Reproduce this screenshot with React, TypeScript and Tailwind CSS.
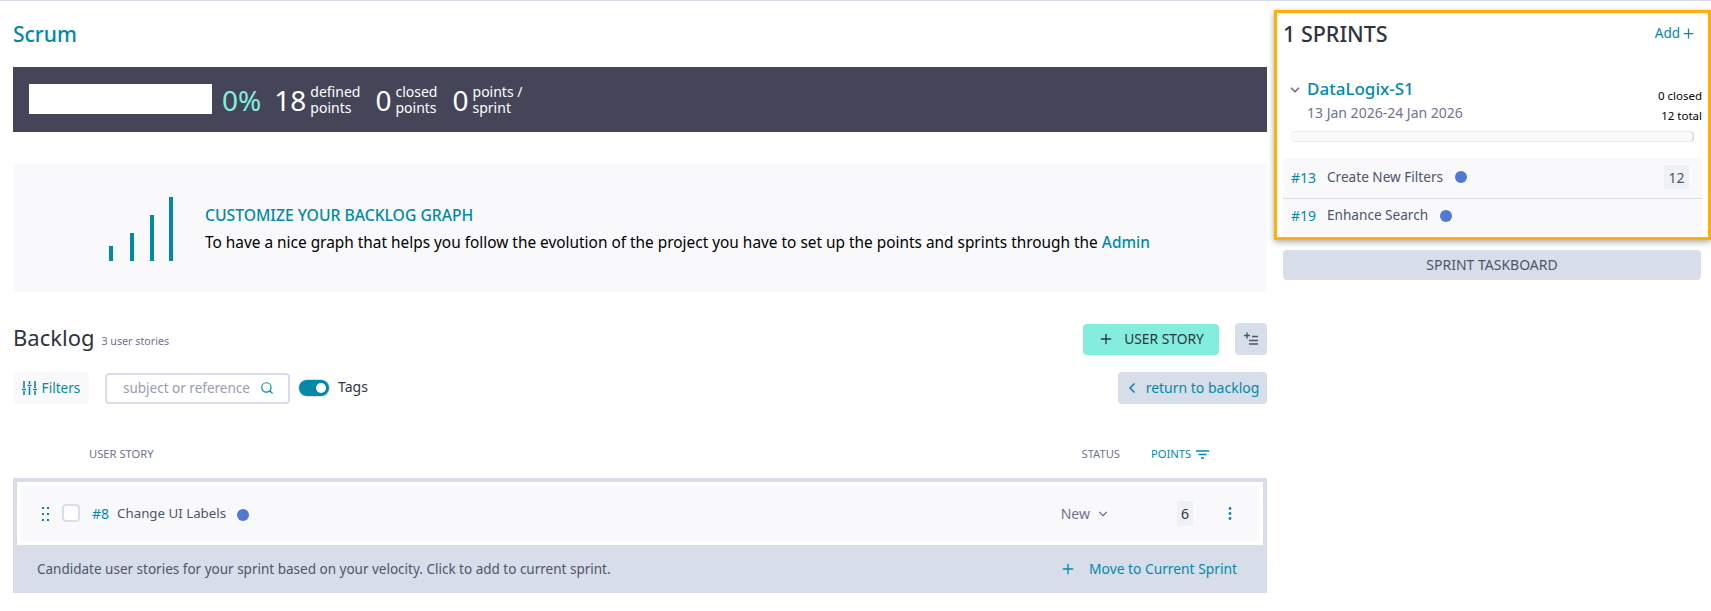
import { Search, Plus, ChevronDown, ChevronLeft } from 'lucide-react';

const font = 'font-["Noto_Sans",sans-serif]';

function Stat({ value, top, bottom }: { value: string; top: string; bottom: string }) {
  return (
    <div className="flex items-center gap-[4px] text-white">
      <span className="text-[28px] leading-none">{value}</span>
      <span className="text-[14px] leading-[16px]">
        {top}
        <br />
        {bottom}
      </span>
    </div>
  );
}

function SprintRow({ id, title, points, last }: { id: string; title: string; points?: string; last?: boolean }) {
  return (
    <div className={`flex items-center pl-2 pr-[13px] ${last ? 'h-[37px] pb-[4px]' : 'h-[41px] border-b border-[#d8dee9] pb-[2px]'}`}>
      <span className="w-[36px] text-[14px] text-[#008aa8]">{id}</span>
      <span className="text-[13.6px] text-[#4c566a]">{title}</span>
      <span className="ml-[12px] h-3 w-3 rounded-full bg-[#5178d3]" />
      {points && (
        <span className="ml-auto flex h-6 w-[25px] items-center justify-center bg-[#eff2f5] text-[14px] text-[#4c566a]">{points}</span>
      )}
    </div>
  );
}

export default function App() {
  return (
    <div className={`${font} h-[611px] w-[1711px] overflow-hidden border-t border-[#d8dee9] bg-white`}>
      <div className="flex">
        <main className="ml-[13px] w-[1254px]">
          <h1 className="mt-[21px] h-[45px] text-[21px] leading-[24px] font-medium text-[#008aa8]">Scrum</h1>

          <div className="flex h-[65px] items-center bg-[#444559] pl-4">
            <div className="-mt-[1px] h-[30px] w-[183px] bg-white" />
            <span className="ml-[10px] text-[28px] leading-none text-[#83eede]">0%</span>
            <div className="ml-[13px]"><Stat value="18" top="defined" bottom="points" /></div>
            <div className="ml-[15px]"><Stat value="0" top="closed" bottom="points" /></div>
            <div className="ml-[15px]"><Stat value="0" top="points /" bottom="sprint" /></div>
          </div>

          <div className="mt-8 flex h-[128px] items-center bg-[#f9f9fb] pl-[96px]">
            <svg width="74" height="64" viewBox="0 0 74 64" className="mt-[1px]">
              <rect x="0" y="49" width="4" height="15" fill="#008aa8" />
              <rect x="21" y="36" width="4" height="28" fill="#008aa8" />
              <rect x="41" y="18" width="4" height="46" fill="#008aa8" />
              <rect x="60" y="0" width="4" height="64" fill="#008aa8" />
            </svg>
            <div className="ml-[22px] mt-[2px]">
              <div className="text-[15.7px] leading-[22px] font-medium text-[#008aa8]">CUSTOMIZE YOUR BACKLOG GRAPH</div>
              <div className="mt-[6px] text-[15.4px] leading-[22px] text-black">
                To have a nice graph that helps you follow the evolution of the project you have to set up the points and sprints through the <span className="font-medium text-[#008aa8]">Admin</span>
              </div>
            </div>
          </div>

          <div className="mt-[31px] flex h-[32px] items-center">
            <h2 className="-mt-[4px] text-[22px] leading-none text-[#2e3440]">Backlog</h2>
            <span className="ml-[7px] mt-[4px] text-[10.7px] text-[#70728f]">3 user stories</span>
            <button className="ml-auto flex h-[31px] w-[136px] items-center justify-center gap-[10px] rounded bg-[#83eede] text-[13.8px] text-[#2e3440]">
              <Plus size={16} />
              <span className="mt-[1px]">USER STORY</span>
            </button>
            <button className="ml-4 flex h-8 w-8 items-center justify-center rounded bg-[#d8dee9]">
              <svg width="16" height="16" viewBox="0 0 16 16" stroke="#4c566a" strokeWidth="1.4" fill="none">
                <path d="M1 4.5h6M4 1.5v6M9 5.5h6M6 9.5h9M6 13h9" />
              </svg>
            </button>
          </div>

          <div className="mt-[17px] flex h-8 items-center">
            <button className="flex h-8 w-[76px] items-center justify-center gap-[5px] rounded bg-[#f9f9fb] text-[13.6px] text-[#008aa8]">
              <svg width="15" height="14" viewBox="0 0 15 14" stroke="#008aa8" strokeWidth="1.6" fill="none">
                <path d="M2 0v7M2 10v4M7.5 0v3M7.5 6v8M13 0v7M13 10v4M0 8.5h4M5.5 4.5h4M11 8.5h4" />
              </svg>
              Filters
            </button>
            <div className="ml-4 flex h-[31px] w-[185px] items-center rounded-sm border-2 border-[#d8dee9] pl-4 pr-[14px]">
              <span className="flex-1 text-[13.5px] whitespace-nowrap text-[#9a9caf]">subject or reference</span>
              <Search size={14} className="text-[#008aa8]" />
            </div>
            <div className="ml-[9px] flex h-4 w-[30px] items-center justify-end rounded-full bg-[#008aa8] pr-[3px] ring-1 ring-[#d8dee9]">
              <span className="h-[10px] w-[10px] rounded-full bg-white" />
            </div>
            <span className="ml-[9px] -mt-[3px] text-[14px] text-[#2e3440]">Tags</span>
            <button className="ml-auto flex h-8 w-[149px] items-center justify-center gap-[6px] rounded bg-[#d8dee9] pr-[2px] text-[14px] text-[#008aa8]">
              <ChevronLeft size={16} strokeWidth={2.5} />
              <span className="-mt-[1px]">return to backlog</span>
            </button>
          </div>

          <div className="mt-[42px] flex h-[16px] items-center text-[11.2px] text-[#70728f]">
            <span className="ml-[76px]">USER STORY</span>
            <span className="ml-auto">STATUS</span>
            <span className="ml-[31px] flex w-[116px] items-center gap-[5px] text-[#008aa8]">
              POINTS
              <svg width="13" height="9" viewBox="0 0 13 9" stroke="#008aa8" strokeWidth="1.3">
                <path d="M0 1h13M2.5 4.5h8M5 8h3" />
              </svg>
            </span>
          </div>

          <div className="mt-4 bg-[#d8dee9] pt-1">
            <div className="mx-1 bg-white p-1">
              <div className="flex h-[55px] items-center rounded bg-[#f9f9fb] pl-[21px]">
                <svg width="8" height="16" viewBox="0 0 8 16" fill="#008aa8">
                  <rect x="0" y="1" width="2" height="2" /><rect x="5" y="1" width="2" height="2" />
                  <rect x="0" y="7" width="2" height="2" /><rect x="5" y="7" width="2" height="2" />
                  <rect x="0" y="13" width="2" height="2" /><rect x="5" y="13" width="2" height="2" />
                </svg>
                <span className="ml-[12px] -mt-[2px] h-[18px] w-[18px] rounded-sm border-2 border-[#d8dee9] bg-white" />
                <span className="ml-[12px] text-[14px] text-[#008aa8]">#8</span>
                <span className="ml-[8px] text-[13.3px] text-[#4c566a]">Change UI Labels</span>
                <span className="ml-[11px] mt-[2px] h-3 w-3 rounded-full bg-[#5178d3]" />
                <span className="ml-auto flex items-center gap-[6px] text-[14px] text-[#70728f]">
                  New
                  <ChevronDown size={14} />
                </span>
                <span className="ml-[67px] flex h-[25px] w-4 items-center justify-center bg-[#eff2f5] text-[14px] text-[#2e3440]">6</span>
                <svg width="4" height="13" viewBox="0 0 4 13" fill="#008aa8" className="ml-[35px] mr-[27px]">
                  <circle cx="2" cy="1.5" r="1.4" /><circle cx="2" cy="6.5" r="1.4" /><circle cx="2" cy="11.5" r="1.4" />
                </svg>
              </div>
            </div>
            <div className="flex h-[48px] items-center pl-[24px] text-[13.5px] text-[#4c566a]">
              Candidate user stories for your sprint based on your velocity. Click to add to current sprint.
              <span className="ml-auto flex items-center gap-[13px] pr-[30px] text-[13.8px] text-[#008aa8]">
                <Plus size={16} />
                Move to Current Sprint
              </span>
            </div>
          </div>
        </main>

        <aside className="ml-[7px] w-[437px]">
          <div className="mt-[9px] h-[230px] border-[3px] border-[#ffae0a] px-[6px] shadow-[0_2px_6px_rgba(0,0,0,0.35)]">
            <div className="flex h-[43px] items-center justify-between pr-[6px]">
              <span className="text-[21.5px] font-medium text-[#2e3440]">1 SPRINTS</span>
              <span className="-mt-[2px] flex items-center gap-[1px] text-[13.5px] text-[#008aa8]">
                Add
                <Plus size={15} />
              </span>
            </div>
            <div className="flex h-[67px] items-start justify-between pt-[22px]">
              <div className="flex items-start">
                <ChevronDown size={14} strokeWidth={3} className="ml-[5px] mt-[5px] text-[#70728f]" />
                <div className="ml-[5px]">
                  <div className="text-[17px] leading-[22px] font-medium text-[#008aa8]">DataLogix-S1</div>
                  <div className="mt-[1px] text-[14px] leading-[24px] text-[#70728f]">13 Jan 2026-24 Jan 2026</div>
                </div>
              </div>
              <div className="pt-[8px] text-right text-[11.5px] leading-[20px] text-black">
                0 closed
                <br />
                12 total
              </div>
            </div>
            <div className="mx-2 mt-[8px] h-[11px] rounded-sm bg-[#fafafa] shadow-[inset_-1px_0_2px_rgba(0,0,0,0.2)]" />
            <div className="mt-4 bg-[#f9f9fb]">
              <SprintRow id="#13" title="Create New Filters" points="12" />
              <SprintRow id="#19" title="Enhance Search" last />
            </div>
          </div>
          <button className="mx-[9px] mt-[10px] flex h-[30px] w-[418px] items-center justify-center rounded bg-[#d8dee9] text-[14px] text-[#4c566a]">
            <span className="-mt-[1px]">SPRINT TASKBOARD</span>
          </button>
        </aside>
      </div>
    </div>
  );
}
